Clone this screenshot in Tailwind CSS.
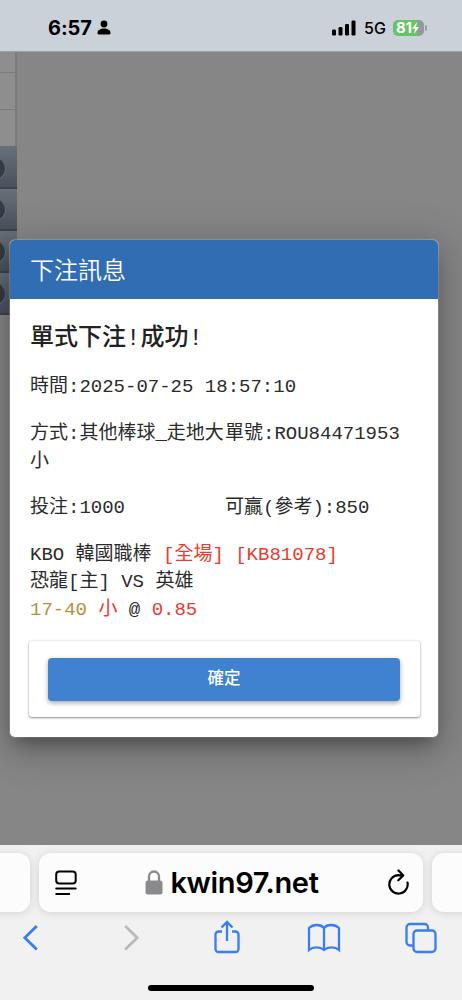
<!DOCTYPE html>
<html lang="zh-Hant">
<head>
  <meta charset="UTF-8">
  <meta name="viewport" content="width=device-width, initial-scale=1.0">
  <title>下注訊息</title>
  <script src="https://cdn.jsdelivr.net/npm/@tailwindcss/browser@4"></script>
</head>
<body class="h-[1000px] w-[462px] overflow-hidden flex flex-col bg-[#868686] font-['Inter','Noto_Sans_CJK_TC',sans-serif]">
  <!-- status bar -->
  <header class="h-[51px] shrink-0 bg-[#cad1d9] flex items-center justify-between pt-[4px] pl-[48px] pr-[38px] text-black">
    <div class="flex items-center gap-[5px]">
      <span class="text-[20px] font-bold leading-6 tracking-[-0.1px]">6:57</span>
      <svg class="w-[14px] h-[15px]" viewBox="0 0 14 15"><circle cx="7" cy="4" r="3.4"/><path d="M.5 12.800C.5 10.200 3.500 8.500 7 8.500s6.500 1.700 6.500 4.300c0 1.200-.5 1.700-1.300 1.700H1.800C1 14.500.5 14 .5 12.800z"/></svg>
    </div>
    <div class="flex items-center">
      <svg class="w-6 h-4" viewBox="0 0 24 16"><rect y="9.500" width="4" height="6" rx="1.200"/><rect x="6.500" y="7" width="4" height="8.500" rx="1.200"/><rect x="13" y="4" width="4" height="11.500" rx="1.200"/><rect x="19.500" y=".5" width="4" height="15" rx="1.200"/></svg>
      <span class="ml-[8px] w-[22px] text-[16px] leading-5 font-medium">5G</span>
      <div class="relative ml-[7px] w-[31px] h-4 rounded-[5px] bg-linear-to-r from-[#65c466] from-82% to-[#96989f] to-82% text-white flex items-center pl-[3px]">
        <span class="text-[15px] leading-4 font-bold tracking-[-0.2px]">81</span>
        <svg class="w-[7px] h-[12px] fill-white" viewBox="0 0 7 12"><path d="M5 0 0 6.800h3L2 12l5-7H4z"/></svg>
        <span class="absolute -right-[3px] top-[5px] w-[2px] h-[6px] rounded-r bg-[#9a9da3]"></span>
      </div>
    </div>
  </header>

  <!-- dimmed page -->
  <main class="relative h-[794px] shrink-0 border-t border-[#9da0a3]">
    <div class="w-[17px] flex flex-col">
      <div class="h-[21px] bg-[#8e8e8e] border-b border-r-2 border-[#7b7b7b]"></div>
      <div class="h-[37px] bg-[#8e8e8e] border-b border-r-2 border-[#7b7b7b]"></div>
      <div class="h-[36px] bg-[#8e8e8e] border-r-2 border-[#7b7b7b]"></div>
      <div class="h-[43px] bg-linear-to-b from-[#687079] to-[#49515c] border-b-2 border-[#3b424b] overflow-hidden"><div class="mt-[12px] -ml-[16px] size-[22px] rounded-full bg-[#343b45] border-r border-b border-[#646c76]"></div></div>
      <div class="h-[42px] bg-linear-to-b from-[#687079] to-[#49515c] border-b-2 border-[#3b424b] overflow-hidden"><div class="mt-[10px] -ml-[16px] size-[22px] rounded-full bg-[#343b45] border-r border-b border-[#646c76]"></div></div>
      <div class="h-[42px] bg-linear-to-b from-[#687079] to-[#49515c] border-b-2 border-[#3b424b] overflow-hidden"><div class="mt-[10px] -ml-[16px] size-[22px] rounded-full bg-[#343b45] border-r border-b border-[#646c76]"></div></div>
      <div class="h-[42px] bg-linear-to-b from-[#687079] to-[#49515c] border-b-2 border-[#3b424b] overflow-hidden"><div class="mt-[10px] -ml-[16px] size-[22px] rounded-full bg-[#343b45] border-r border-b border-[#646c76]"></div></div>
    </div>

    <!-- bet confirmation dialog -->
    <section class="absolute left-[10px] top-[188px] w-[428px] h-[497px] rounded-[5px] overflow-hidden bg-white text-[#2b2b2b] shadow-[0_12px_17px_-7px_rgba(0,0,0,0.35),0_8px_38px_7px_rgba(0,0,0,0.22),0_0_1px_1px_rgba(190,190,190,0.5)] font-['Liberation_Mono','Noto_Sans_CJK_TC',monospace]">
      <h1 class="h-[59px] bg-[#316db3] text-white text-[24px] leading-[66px] px-5 font-[350]">下注訊息</h1>
      <div class="px-5 pt-[22px] text-[19px] leading-[27.3px]">
        <h2 class="text-[24px] leading-[36px] font-medium text-[#222]">單式下注!成功!</h2>
        <p class="mt-[17px]">時間:2025-07-25 18:57:10</p>
        <div class="mt-[20px] grid grid-cols-[195px_195px]">
          <p class="break-all">方式:其他棒球_走地大小</p>
          <p class="whitespace-nowrap">單號:ROU84471953</p>
        </div>
        <div class="mt-[19px] grid grid-cols-[195px_195px]">
          <p>投注:1000</p>
          <p>可贏(參考):850</p>
        </div>
        <div class="mt-[20px] whitespace-nowrap">
          <p>KBO 韓國職棒 <span class="text-[#ea3b2e]">[全場] [KB81078]</span></p>
          <p>恐龍[主] VS 英雄</p>
          <p><span class="text-[#b8903b]">17-40</span> <span class="text-[#ea3b2e]">小</span> @ <span class="text-[#ea3b2e]">0.85</span></p>
        </div>
      </div>
      <div class="mt-[17px] mx-[19px] h-[76px] w-[391px] rounded-[3px] px-[19px] pt-[17px] shadow-[0_1px_2px_rgba(0,0,0,0.38),0_0_3px_rgba(0,0,0,0.16)]">
        <button class="block w-[352px] h-[43px] rounded-[4px] bg-[#4082d0] text-white text-[16.5px] leading-[40px] font-medium shadow-[0_2px_5px_rgba(0,0,0,0.35)]">確定</button>
      </div>
    </section>
  </main>

  <!-- browser toolbar -->
  <footer class="flex-1 bg-[#f1f1f1] flex flex-col items-center overflow-hidden">
    <div class="mt-[8px] w-[522px] flex justify-center gap-[9px] shrink-0">
      <div class="w-[60px] h-[59px] rounded-[12px] bg-[#fcfcfc] shadow-[0_1px_9px_rgba(0,0,0,0.13)]"></div>
      <div class="w-[384px] h-[59px] rounded-[12px] bg-[#fcfcfc] shadow-[0_1px_9px_rgba(0,0,0,0.13)] flex items-center justify-between pl-[16px] pr-[13px] shrink-0">
        <svg class="w-[22px] h-[26px] fill-none stroke-black stroke-2" stroke-linecap="round" viewBox="0 0 22 26"><rect x="1.200" y="1.500" width="19.500" height="12" rx="3"/><path d="M1.200 18.500h19.500M1.200 24h13"/></svg>
        <div class="flex items-center text-black">
          <svg class="w-[18px] h-[25px] mr-[7px]" viewBox="0 0 18 25"><path class="fill-none stroke-[#8a8a8c] stroke-[2.300]" d="M4 12V6.500a5 5 0 0 1 10 0V12"/><rect class="fill-[#8a8a8c]" x=".5" y="10.500" width="17" height="14" rx="2.500"/></svg>
          <span class="pt-px text-[29px] leading-8 font-semibold tracking-[-0.35px]">kwin97.net</span>
        </div>
        <svg class="w-[23px] h-[27px] fill-none stroke-black stroke-[2.200]" stroke-linecap="round" stroke-linejoin="round" viewBox="0 0 23 27"><path d="M20.500 13.500A9.200 9.200 0 1 1 11.300 6.200l5 .3M11.500 1.500l4.800 5-5 4.800"/></svg>
      </div>
      <div class="w-[60px] h-[59px] rounded-[12px] bg-[#fcfcfc] shadow-[0_1px_9px_rgba(0,0,0,0.13)]"></div>
    </div>
    <nav class="mt-[7px] w-full h-[36px] shrink-0 flex pl-[22px] fill-none stroke-[#397cf7] stroke-[2.300]" stroke-linecap="round" stroke-linejoin="round">
      <svg class="w-[18px] h-[36px] stroke-[2.800]" viewBox="0 0 18 36"><path d="M14.800 7 2.800 18.800l12 11.800"/></svg>
      <svg class="ml-[82px] w-[18px] h-[36px] stroke-[#bababa] stroke-[2.800]" viewBox="0 0 18 36"><path d="M3.200 7l12 11.800-12 11.800"/></svg>
      <svg class="ml-[73px] w-[28px] h-[36px]" viewBox="0 0 28 36"><path d="M9 12.500H5.500a3 3 0 0 0-3 3V30a3 3 0 0 0 3 3h17a3 3 0 0 0 3-3V15.500a3 3 0 0 0-3-3H19M14 22V3M8.500 8.500 14 3 19.500 8.500"/></svg>
      <svg class="ml-[66px] w-[34px] h-[36px]" viewBox="0 0 34 36"><path d="M17 9c-3-4-11-4-15 0v22c4-3.500 11-3.500 15 0 4-3.500 11-3.500 15 0V9c-4-4-12-4-15 0zv22"/></svg>
      <svg class="ml-[63px] w-[33px] h-[36px]" viewBox="0 0 33 36"><rect x="9.500" y="11.500" width="22" height="21.500" rx="3.500"/><path d="M9 26.500H6A3.500 3.500 0 0 1 2.500 23V8.500A3.500 3.500 0 0 1 6 5h14.500A3.500 3.500 0 0 1 24 8.500v3"/></svg>
    </nav>
    <div class="mt-[30px] w-[166px] h-[6px] shrink-0 rounded-full bg-black"></div>
  </footer>
</body>
</html>
